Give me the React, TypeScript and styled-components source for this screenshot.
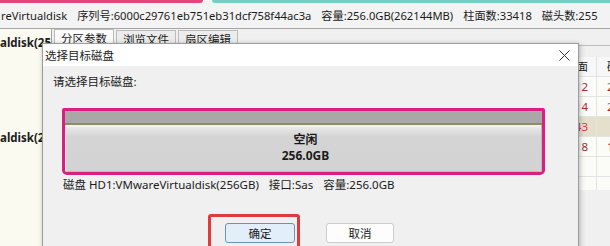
import React from "react";
import styled, {createGlobalStyle} from "styled-components";

const GlobalStyle = createGlobalStyle`
  html, body {
    margin: 0;
    padding: 0;
  }
  body {
    width: 610px;
    height: 246px;
    overflow: hidden;
    background: #f0f0f0;
    font-family: "Noto Sans", "Noto Sans CJK SC", sans-serif;
    font-size: 11.5px;
    color: #1b1b1b;
  }
`

const Page = styled.div`
  position: relative;
  width: 610px;
  height: 246px;
  overflow: hidden;
  display: flex;
  flex-direction: column;
  background: #f0f0f0;
`

const TopStrip = styled.div`
  display: flex;
  gap: 9px;
  height: 4px;
  background: #f2f2f2;
`

const Mark = styled.div<{ $color: string, $width?: number, $side: "left" | "right" }>`
  height: 3px;
  background: ${p => p.$color};
  ${p => p.$width ? `width: ${p.$width}px;` : "flex: 1;"}
  border-bottom-${p => p.$side}-radius: 3px;
`

const InfoBar = styled.div`
  height: 24px;
  line-height: 24px;
  padding-left: 1px;
  font-size: 11.2px;
  white-space: nowrap;
  overflow: hidden;
  background: #f3f3f3;
  border-bottom: 1px solid #a6a6a6;
`

const Field = styled.span<{ $gap: number }>`
  & + & {
    margin-left: ${p => p.$gap}px;
  }
`

const Main = styled.div`
  flex: 1;
  display: flex;
  min-height: 0;
`

const DiskList = styled.div`
  width: 51px;
  background: #fbfaf0;
  border-right: 1px solid #a3a3a3;
  display: flex;
  flex-direction: column;
  overflow: hidden;
`

const DiskItem = styled.div<{ $gap: number }>`
  margin-top: ${p => p.$gap}px;
  line-height: 16px;
  font-weight: bold;
  white-space: nowrap;
`

const Workspace = styled.div`
  flex: 1;
  display: flex;
  flex-direction: column;
  min-width: 0;
`

const TabRow = styled.div`
  height: 16px;
  display: flex;
  align-items: flex-end;
  padding-left: 2px;
  gap: 2px;
`

const Tab = styled.div<{ $active?: boolean }>`
  height: ${p => p.$active ? 15 : 14}px;
  padding: 0 6px;
  line-height: 18px;
  background: ${p => p.$active ? "#fbfbfb" : "#ececec"};
  border: 1px solid #bcbcbc;
  border-bottom: none;
  white-space: nowrap;
`

const TabBody = styled.div`
  flex: 1;
  border-top: 1px solid #bcbcbc;
  padding-top: 11px;
  background: #f0f0f0;
`

const Table = styled.div`
  display: grid;
  grid-template-columns: 1fr 57px 53px;
  grid-auto-rows: 20px;
  margin-left: 4px;
  margin-right: -40px;
  height: 133px;
  overflow: hidden;
  background: #fbfbf8;
`

const Cell = styled.div<{ $align: "left" | "right", $head?: boolean, $hl?: boolean }>`
  line-height: 19px;
  border-bottom: 1px solid #e3e3e3;
  border-right: 1px solid #e3e3e3;
  text-align: ${p => p.$align};
  padding: ${p => p.$align === "right" ? "0 8px 0 0" : "0 0 0 10px"};
  color: ${p => p.$head ? "#1b1b1b" : p.$hl ? "#c0405a" : "#a52a2a"};
  background: ${p => p.$head ? "#f7f7f7" : p.$hl ? "#e4e0cc" : "transparent"};
  white-space: nowrap;
`

const Dialog = styled.div`
  position: absolute;
  left: 42px;
  top: 43px;
  width: 537px;
  height: 215px;
  box-sizing: border-box;
  border: 1px solid #9c9c9c;
  background: #f0f0f0;
  box-shadow: 1px 1px 5px rgba(0, 0, 0, 0.28);
  display: flex;
  flex-direction: column;
`

const TitleBar = styled.div`
  height: 22px;
  background: #ffffff;
  display: flex;
  align-items: center;
  justify-content: space-between;
  padding: 0 8px 0 2px;
  font-size: 11.5px;
`

const CloseIcon = () => (
  <svg width="11" height="11" viewBox="0 0 11 11">
    <path d="M0.5 0.5 L10.5 10.5 M10.5 0.5 L0.5 10.5" stroke="#333" strokeWidth="1"/>
  </svg>
)

const Body = styled.div`
  flex: 1;
  padding: 8px 0 0 10px;
  display: flex;
  flex-direction: column;
`

const Prompt = styled.div`
  line-height: 16px;
`

const DiskBox = styled.div`
  margin: 18px 0 0 9px;
  width: 483px;
  height: 67px;
  box-sizing: border-box;
  border: 3px solid #d8207f;
  border-radius: 2px 2px 5px 5px;
  display: flex;
  flex-direction: column;
  overflow: hidden;
`

const DiskHead = styled.div`
  height: 12px;
  background: #a9a8a6;
  border-bottom: 2px solid #8e8c62;
`

const DiskFree = styled.div`
  flex: 1;
  display: flex;
  flex-direction: column;
  align-items: center;
  justify-content: center;
  font-weight: bold;
  font-size: 12px;
  line-height: 16px;
  background: linear-gradient(#f5f5f5 0, #e4e4e4 4px, #d4d4d4 12px, #d3d3d3 100%);
  border-left: 1px solid #e8e8e8;
  border-right: 1px solid #bcbcbc;
  border-bottom: 1px solid #bcbcbc;
  padding-left: 4px;
`

const InfoLine = styled.div`
  margin: 2px 0 0 10px;
  line-height: 16px;
  white-space: nowrap;
`

const ButtonRow = styled.div`
  margin: 30px 12px 0 0;
  display: flex;
  justify-content: center;
  gap: 31px;
`

const Button = styled.button<{ $primary?: boolean }>`
  width: ${p => p.$primary ? 70 : 68}px;
  height: 20px;
  padding: 0;
  font: inherit;
  color: #1b1b1b;
  border-radius: 3px;
  border: 1px solid ${p => p.$primary ? "#6f92b3" : "#cdcdcd"};
  background: ${p => p.$primary ? "#e2eefa" : "#fdfdfd"};
`

const Highlight = styled.div`
  position: absolute;
  left: 208px;
  top: 214px;
  width: 92px;
  height: 40px;
  box-sizing: border-box;
  border: 3px solid #e03a3c;
  border-radius: 3px;
`

const rows = [
  {cyl: "2612", heads: "254"},
  {cyl: "6014", heads: "254"},
  {cyl: "9843", heads: "", hl: true},
  {cyl: "33418", heads: "1"},
  {cyl: "", heads: ""},
  {cyl: "", heads: ""},
]

const diskFields = [
  "reVirtualdisk",
  "序列号:6000c29761eb751eb31dcf758f44ac3a",
  "容量:256.0GB(262144MB)",
  "柱面数:33418",
  "磁头数:255",
]

const targetFields = [
  "磁盘 HD1:VMwareVirtualdisk(256GB)",
  "接口:Sas",
  "容量:256.0GB",
]

const App = () => {
  return (
    <>
      <GlobalStyle/>
      <Page>
        <TopStrip>
          <Mark $color="#e3467a" $width={203} $side="right"/>
          <Mark $color="#74cfc5" $side="left"/>
        </TopStrip>
        <InfoBar>
          {diskFields.map(f => <Field key={f} $gap={6}>{f}</Field>)}
        </InfoBar>
        <Main>
          <DiskList>
            <DiskItem $gap={6}>aldisk(256GB)</DiskItem>
            <DiskItem $gap={79}>aldisk(256GB)</DiskItem>
          </DiskList>
          <Workspace>
            <TabRow>
              <Tab $active>分区参数</Tab>
              <Tab>浏览文件</Tab>
              <Tab>扇区编辑</Tab>
            </TabRow>
            <TabBody>
              <Table>
                <Cell $align="left" $head>卷标</Cell>
                <Cell $align="right" $head>终止柱面</Cell>
                <Cell $align="left" $head>磁头</Cell>
                {rows.map((r, i) => (
                  <React.Fragment key={i}>
                    <Cell $align="left" $hl={r.hl}/>
                    <Cell $align="right" $hl={r.hl}>{r.cyl}</Cell>
                    <Cell $align="left" $hl={r.hl}>{r.heads}</Cell>
                  </React.Fragment>
                ))}
              </Table>
            </TabBody>
          </Workspace>
        </Main>
        <Dialog>
          <TitleBar>
            <span>选择目标磁盘</span>
            <CloseIcon/>
          </TitleBar>
          <Body>
            <Prompt>请选择目标磁盘:</Prompt>
            <DiskBox>
              <DiskHead/>
              <DiskFree>
                <div>空闲</div>
                <div>256.0GB</div>
              </DiskFree>
            </DiskBox>
            <InfoLine>
              {targetFields.map(f => <Field key={f} $gap={10}>{f}</Field>)}
            </InfoLine>
            <ButtonRow>
              <Button $primary>确定</Button>
              <Button>取消</Button>
            </ButtonRow>
          </Body>
        </Dialog>
        <Highlight/>
      </Page>
    </>
  );
};

export default App;
